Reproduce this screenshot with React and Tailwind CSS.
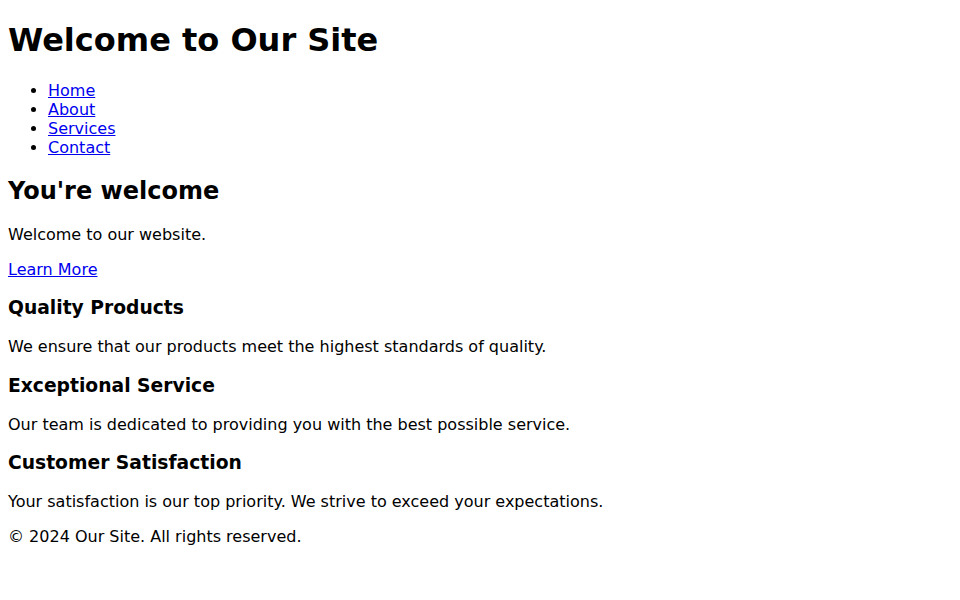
import React from 'react';

const FEATURES = [
  { title: 'Quality Products', text: 'We ensure that our products meet the highest standards of quality.' },
  { title: 'Exceptional Service', text: 'Our team is dedicated to providing you with the best possible service.' },
  { title: 'Customer Satisfaction', text: 'Your satisfaction is our top priority. We strive to exceed your expectations.' },
];

const NAV = ['Home', 'About', 'Services', 'Contact'];

export default function App() {
  return (
    <div className="bg-white text-black px-2 pb-2 font-['DejaVu_Sans',sans-serif] leading-[normal] text-[16px]">
      <header>
        <h1 className="text-[32px] font-bold my-[21.44px]">Welcome to Our Site</h1>
        <nav>
          <ul className="list-disc pl-10 my-4">
            {NAV.map(item => (
              <li key={item}>
                <a href="#" className="text-[#0000EE] underline">{item}</a>
              </li>
            ))}
          </ul>
        </nav>
      </header>

      <main>
        <section>
          <h2 className="text-[24px] font-bold my-[19.92px]">You're welcome</h2>
          <p className="my-4">Welcome to our website.</p>
          <p className="my-4">
            <a href="#" className="text-[#0000EE] underline">Learn More</a>
          </p>
        </section>

        {FEATURES.map(f => (
          <section key={f.title}>
            <h3 className="text-[18.72px] font-bold my-[18.72px]">{f.title}</h3>
            <p className="my-4">{f.text}</p>
          </section>
        ))}
      </main>

      <footer>
        <p className="my-4">© 2024 Our Site. All rights reserved.</p>
      </footer>
    </div>
  );
}
